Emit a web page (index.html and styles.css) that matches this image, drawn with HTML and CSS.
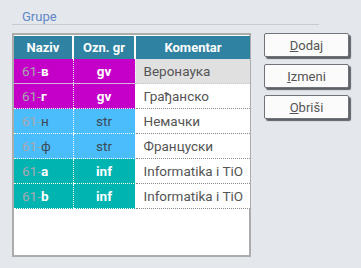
FILE: index.html
```html
<!DOCTYPE html>
<html lang="sr">
  <head>
    <meta charset="UTF-8" />
    <title>Grupe</title>
    <link rel="stylesheet" href="styles.css">
  </head>
  <body>
    <div class="l-panel">
      <div class="c-legend">Grupe</div>
      <div class="l-row">
        <div class="c-grid">
          <table class="c-table">
            <thead>
              <tr>
                <th class="c-col--naziv">Naziv</th>
                <th class="c-col--ozn">Ozn. gr</th>
                <th class="c-col--kom">Komentar</th>
              </tr>
            </thead>
            <tbody>
              <tr class="is-gv is-selected">
                <td><span class="c-prefix">61-</span><b>в</b></td>
                <td class="u-center"><b>gv</b></td>
                <td class="c-note">Веронаука</td>
              </tr>
              <tr class="is-gv">
                <td><span class="c-prefix">61-</span><b>г</b></td>
                <td class="u-center"><b>gv</b></td>
                <td class="c-note">Грађанско</td>
              </tr>
              <tr class="is-str">
                <td><span class="c-prefix">61-</span>н</td>
                <td class="u-center">str</td>
                <td class="c-note">Немачки</td>
              </tr>
              <tr class="is-str">
                <td><span class="c-prefix">61-</span>ф</td>
                <td class="u-center">str</td>
                <td class="c-note">Француски</td>
              </tr>
              <tr class="is-inf">
                <td><span class="c-prefix">61-</span><b>a</b></td>
                <td class="u-center"><b>inf</b></td>
                <td class="c-note">Informatika i TiO</td>
              </tr>
              <tr class="is-inf">
                <td><span class="c-prefix">61-</span><b>b</b></td>
                <td class="u-center"><b>inf</b></td>
                <td class="c-note">Informatika i TiO</td>
              </tr>
            </tbody>
          </table>
        </div>
        <div class="c-actions">
          <button class="c-btn"><u>D</u>odaj</button>
          <button class="c-btn"><u>I</u>zmeni</button>
          <button class="c-btn"><u>O</u>briši</button>
        </div>
      </div>
    </div>
  </body>
</html>
```

FILE: styles.css
```css
:root {
  --bg: #e4e7eb;
  --head: #2f82a1;
  --gv: #c400c8;
  --str: #4cbdfc;
  --inf: #00b4b2;
  --text: #555555;
}

html {
  background: var(--bg);
}

body {
  margin: 0;
  font-family: Roboto, "Liberation Sans", sans-serif;
  font-size: 13px;
  color: var(--text);
}

.l-panel {
  padding: 9px 0 0 12px;
}

.c-legend {
  width: 297px;
  padding: 0 0 0 10px;
  height: 15px;
  line-height: 15px;
  color: #6088c8;
  font-size: 13px;
  border-bottom: 1px solid #c7cbd4;
}

.l-row {
  display: flex;
  align-items: flex-start;
  margin-top: 8px;
}

.c-grid {
  width: 235px;
  height: 220px;
  background: #ffffff;
  border: 2px solid #acacac;
}

.c-table {
  border-collapse: collapse;
  table-layout: fixed;
  width: 236px;
  margin: 1px 0 0 0;
}

.c-table th {
  background: var(--head);
  color: #ffffff;
  font-weight: 700;
  height: 23px;
  padding: 0;
  border-left: 2px solid #ffffff;
  text-align: center;
}

.c-table th:first-child {
  border-left: 0;
}

.c-col--naziv {
  width: 58px;
}

.c-col--ozn {
  width: 60px;
}

.c-table td {
  height: 24px;
  padding: 0 0 0 8px;
  color: #ffffff;
  font-size: 13.5px;
  border-left: 1px dotted #ffffff;
  border-bottom: 1px dotted #ffffff;
  white-space: nowrap;
}

.c-table td:first-child {
  border-left: 0;
}

.c-table td.u-center {
  text-align: center;
  padding: 0;
}

.c-table td.c-note {
  background: #ffffff;
  color: var(--text);
  border-bottom: 1px dotted #8a8a8a;
  padding-left: 8px;
}

.is-selected td {
  border-bottom-style: solid;
  border-bottom-color: #d8b4da;
}

.is-selected td.c-note {
  background: #e0e0e0;
  border-bottom-color: #c8c8c8;
}

.is-gv td {
  background: var(--gv);
}

.is-str td {
  background: var(--str);
  color: #3d4a55;
}

.is-inf td {
  background: var(--inf);
}

.c-prefix {
  color: #a8a8b0;
}

.c-table b {
  font-weight: 700;
}

.c-actions {
  display: flex;
  flex-direction: column;
  gap: 7px;
  margin-left: 13px;
}

.c-btn {
  width: 85px;
  height: 24px;
  padding: 0;
  background: #fbfbfb;
  border: 1px solid #70747a;
  border-radius: 2px;
  box-shadow: 2px 2px 1px #5e6268;
  font-family: Roboto, "Liberation Sans", sans-serif;
  font-size: 13px;
  color: var(--text);
}
```
